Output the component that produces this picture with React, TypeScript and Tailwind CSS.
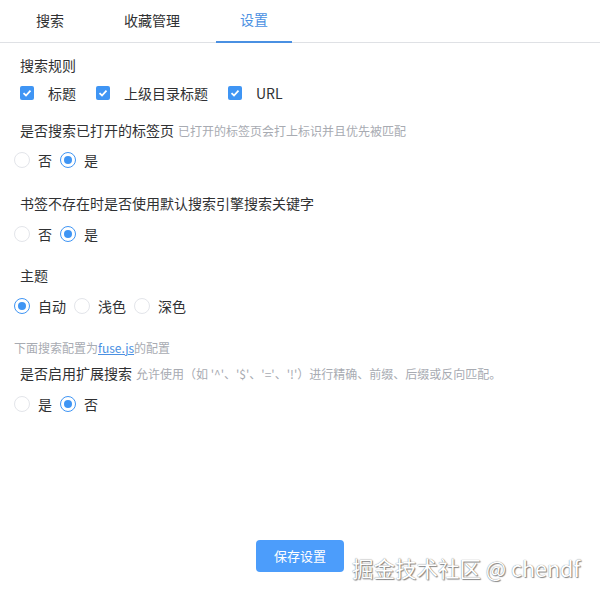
import { useState } from "react"

const tabs = ["搜索", "收藏管理", "设置"]

function Checkbox({ label, checked }: { label: string; checked: boolean }) {
  return (
    <label className="flex items-center mr-5">
      <span
        className={
          checked
            ? "flex h-[14px] w-[14px] items-center justify-center rounded-[2px] bg-[#3f95f4]"
            : "h-[14px] w-[14px] rounded-[2px] border border-[#dcdfe6] bg-white"
        }
      >
        {checked && (
          <svg viewBox="0 0 14 14" className="h-[14px] w-[14px]">
            <path d="M3.5 7.2 L6 9.5 L10.5 4.6" fill="none" stroke="#fff" strokeWidth="1.8" />
          </svg>
        )}
      </span>
      <span className="ml-[14px]">{label}</span>
    </label>
  )
}

function RadioGroup({ options, value }: { options: string[]; value: string }) {
  const [current, setCurrent] = useState(value)
  return (
    <div className="-ml-1.5 flex h-[22px] items-center">
      {options.map((o) => (
        <label key={o} className="mr-2 flex cursor-pointer items-center" onClick={() => setCurrent(o)}>
          <span
            className={
              current === o
                ? "flex h-4 w-4 items-center justify-center rounded-full border border-[#3f95f4] bg-white"
                : "h-4 w-4 rounded-full border border-[#e3e5ea] bg-white"
            }
          >
            {current === o && <span className="h-2 w-2 rounded-full bg-[#3f95f4]" />}
          </span>
          <span className="ml-2">{o}</span>
        </label>
      ))}
    </div>
  )
}

export default function App() {
  return (
    <div
      className="relative flex h-[600px] w-[600px] flex-col bg-white text-[14px] text-[#303133]"
      style={{ fontFamily: '"Noto Sans CJK SC", "Noto Sans", sans-serif' }}
    >
      {/* Tabs */}
      <div className="flex h-[43px] gap-3 border-b border-[#dfe1e5] pl-3">
        {tabs.map((t) => (
          <div
            key={t}
            className={
              t === "设置"
                ? "-mb-px flex items-center border-b-2 border-[#4a90e2] px-6 pb-[2px] text-[#4a90e2]"
                : "flex items-center px-6 pb-[2px] text-[#303133]"
            }
          >
            {t}
          </div>
        ))}
      </div>

      {/* Settings */}
      <div className="flex flex-col px-5 leading-[22px]">
        <div className="mt-[11px]">搜索规则</div>
        <div className="mt-1.5 flex h-[22px] items-center">
          <Checkbox label="标题" checked />
          <Checkbox label="上级目录标题" checked />
          <Checkbox label="URL" checked />
        </div>

        <div className="mt-[15px]">
          是否搜索已打开的标签页
          <span className="ml-1 text-[12px] text-[#a8abb2]">已打开的标签页会打上标识并且优先被匹配</span>
        </div>
        <div className="mt-[7px]">
          <RadioGroup options={["否", "是"]} value="是" />
        </div>

        <div className="mt-[21px]">书签不存在时是否使用默认搜索引擎搜索关键字</div>
        <div className="mt-[9px]">
          <RadioGroup options={["否", "是"]} value="是" />
        </div>

        <div className="mt-[19px]">主题</div>
        <div className="mt-[9px]">
          <RadioGroup options={["自动", "浅色", "深色"]} value="自动" />
        </div>

        <div className="-ml-1.5 mt-[22px] text-[12px] leading-[18px] text-[#a8abb2]">
          下面搜索配置为
          <a className="text-[#4a90e2] underline" href="#">
            fuse.js
          </a>
          的配置
        </div>
        <div className="mt-[5px]">
          是否启用扩展搜索
          <span className="ml-1 text-[12px] text-[#a8abb2]">
            允许使用（如 '^'、'$'、'='、'!'）进行精确、前缀、后缀或反向匹配。
          </span>
        </div>
        <div className="mt-[8px]">
          <RadioGroup options={["是", "否"]} value="否" />
        </div>
      </div>

      <div className="mt-auto flex justify-center pb-[28px]">
        <button className="h-8 w-[88px] rounded-[4px] bg-[#4c9dfb] text-[13px] text-white">保存设置</button>
      </div>

      {/* Watermark */}
      <div
        className="absolute left-[352px] top-[554px] text-[21.5px] leading-[28px] text-white"
        style={{ textShadow: "0 0 1px #666, 1px 1px 1px #888" }}
      >
        掘金技术社区 @ chendf
      </div>
    </div>
  )
}
